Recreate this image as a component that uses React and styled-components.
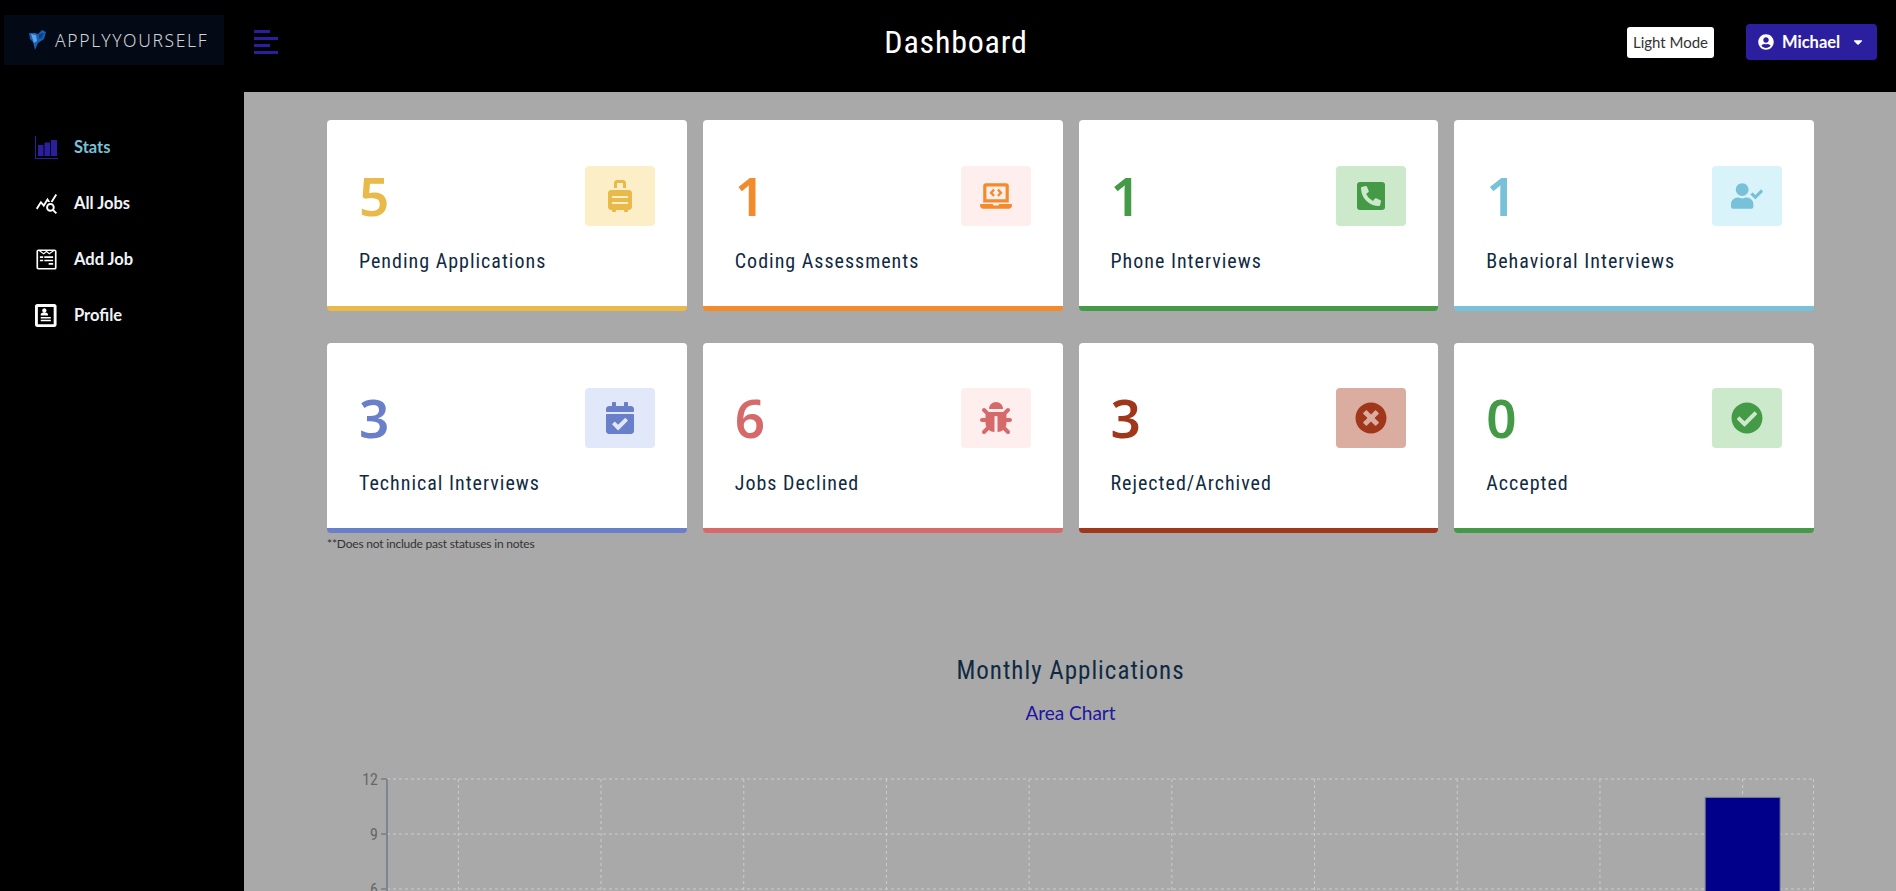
import React from 'react'
import styled, {createGlobalStyle} from 'styled-components'
import {
  FaSuitcaseRolling,
  FaLaptopCode,
  FaPhoneSquareAlt,
  FaUserCheck,
  FaCalendarCheck,
  FaBug,
  FaTimesCircle,
  FaCheckCircle,
  FaUserCircle,
  FaCaretDown,
  FaWpforms
} from 'react-icons/fa'
import {ImProfile} from 'react-icons/im'
import {MdQueryStats} from 'react-icons/md'

const bodyFont = `Lato, "Noto Sans", sans-serif`
const headFont = `"Roboto Condensed", "Liberation Sans Narrow", Roboto, sans-serif`

const GlobalStyle = createGlobalStyle`
  html, body {
    margin: 0;
    height: 100%;
    overflow: hidden;
    background: #000;
    font-family: ${bodyFont};
  }
  * {
    box-sizing: border-box;
  }
`

const Page = styled.div`
  display: grid;
  grid-template-columns: 244px 1fr;
  grid-template-rows: 92px 1fr;
  height: 100vh;
  overflow: hidden;
`

const Header = styled.header`
  grid-column: 1 / 3;
  display: flex;
  align-items: center;
  background: #000;
  padding: 0 19px 0 4px;
`

const LogoBox = styled.div`
  display: flex;
  align-items: center;
  gap: 9px;
  width: 220px;
  height: 50px;
  margin-top: -12px;
  padding-left: 25px;
  background: #030a15;
`

const LogoText = styled.span`
  font-family: "Noto Sans", sans-serif;
  font-size: 17.5px;
  font-weight: 300;
  letter-spacing: 1.65px;
  color: #d0d3d8;
`

const MenuButton = styled.div`
  display: flex;
  flex-direction: column;
  gap: 4px;
  width: 24px;
  margin-left: 30px;
  margin-top: -8px;
`

const MenuBar = styled.span`
  display: block;
  height: 3px;
  width: ${props => (props.$short ? '16px' : '24px')};
  background: #2c1f9f;
`

const Title = styled.h1`
  flex: 1;
  margin: -8px 0 0;
  padding-left: 7px;
  text-align: center;
  font-family: ${headFont};
  font-size: 32px;
  font-weight: 400;
  letter-spacing: 0.8px;
  color: #fff;
`

const ModeButton = styled.button`
  width: 87px;
  height: 31px;
  margin-right: 32px;
  margin-top: -8px;
  padding: 0;
  border: 0;
  border-radius: 3px;
  background: #fff;
  color: #333;
  font-family: ${bodyFont};
  font-size: 15px;
`

const UserButton = styled.button`
  display: flex;
  align-items: center;
  width: 131px;
  height: 36px;
  margin-top: -8px;
  padding: 0 0 0 12px;
  border: 0;
  border-radius: 4px;
  background: #2c1f9f;
  color: #fff;
  font-family: ${bodyFont};
  font-size: 16.5px;
  font-weight: 700;
`

const UserName = styled.span`
  margin: -1px 11px 0 8px;
`

const Sidebar = styled.nav`
  display: flex;
  flex-direction: column;
  padding-top: 27px;
  background: #000;
`

const NavItem = styled.a`
  display: flex;
  align-items: center;
  height: 56px;
  padding-left: 35px;
  font-size: 16.5px;
  font-weight: 700;
  color: ${props => (props.$active ? '#7ac0d8' : '#f0f4f8')};
`

const NavIcon = styled.span`
  display: flex;
  width: 39px;
  font-size: 23px;
  color: ${props => (props.$active ? '#2c1f9f' : '#fff')};
`

const Main = styled.main`
  display: flex;
  flex-direction: column;
  align-items: center;
  padding: 28px 0 0 1px;
  background: #a9a9a9;
  overflow: hidden;
`

const StatsGrid = styled.section`
  display: grid;
  grid-template-columns: repeat(4, 1fr);
  grid-auto-rows: 190.6px;
  gap: 32px 16px;
  width: 1487px;
`

const Card = styled.article`
  padding: 45.6px 32px 0;
  border-bottom: 5px solid ${props => props.$color};
  border-radius: 4px;
  background: #fff;
`

const CardTop = styled.div`
  display: flex;
  justify-content: space-between;
  align-items: center;
`

const Count = styled.span`
  font-family: "Noto Sans", sans-serif;
  font-size: 53px;
  font-weight: 600;
  line-height: 60px;
  color: ${props => props.$color};
`

const IconBox = styled.span`
  display: flex;
  align-items: center;
  justify-content: center;
  width: 70px;
  height: 60px;
  border-radius: 4px;
  font-size: 32px;
  background: ${props => props.$bg};
  color: ${props => props.$color};
`

const Label = styled.h5`
  margin: 20px 0 0;
  font-family: ${headFont};
  font-size: 20px;
  font-weight: 400;
  line-height: 30px;
  letter-spacing: 1px;
  color: #102a43;
`

const Note = styled.p`
  width: 1487px;
  margin: 3px 0 0;
  font-size: 12px;
  letter-spacing: -0.2px;
  color: #333;
`

const ChartTitle = styled.h4`
  margin: 105px 0 0;
  font-family: ${headFont};
  font-size: 25px;
  font-weight: 400;
  letter-spacing: 1px;
  color: #102a43;
`

const ChartType = styled.span`
  margin-top: 16px;
  font-size: 19px;
  color: #2015a0;
`

const ChartFrame = styled.div`
  width: 1487px;
  margin-top: 46px;
  svg {
    display: block;
  }
`

const cards = [
  {n: 5, label: 'Pending Applications', color: '#e9b949', bg: '#fcefc7', Icon: FaSuitcaseRolling},
  {n: 1, label: 'Coding Assessments', color: '#f38b2a', bg: '#ffeeee', Icon: FaLaptopCode},
  {n: 1, label: 'Phone Interviews', color: '#459a47', bg: '#cceacb', Icon: FaPhoneSquareAlt},
  {n: 1, label: 'Behavioral Interviews', color: '#78c1d8', bg: '#d9f3fa', Icon: FaUserCheck},
  {n: 3, label: 'Technical Interviews', color: '#6a7fca', bg: '#e0e8f9', Icon: FaCalendarCheck},
  {n: 6, label: 'Jobs Declined', color: '#d66a6a', bg: '#ffeeee', Icon: FaBug},
  {n: 3, label: 'Rejected/Archived', color: '#a0361a', bg: '#dbaca0', Icon: FaTimesCircle},
  {n: 0, label: 'Accepted', color: '#459a47', bg: '#cceacb', Icon: FaCheckCircle}
]

const StatsIcon = () => (
  <svg width="23" height="23" viewBox="0 0 23 23" fill="currentColor">
    <rect x="0" y="0" width="1" height="23" />
    <rect x="0" y="22" width="23" height="1" />
    <rect x="3" y="9" width="5.5" height="11" />
    <rect x="9.5" y="6.5" width="5.5" height="13.5" />
    <rect x="16" y="4" width="6" height="16" />
  </svg>
)

const links = [
  {label: 'Stats', Icon: StatsIcon, active: true},
  {label: 'All Jobs', Icon: MdQueryStats},
  {label: 'Add Job', Icon: FaWpforms},
  {label: 'Profile', Icon: ImProfile}
]

const Logo = () => (
  <svg width="17" height="20" viewBox="0 0 17 20">
    <path d="M0 3 L6 3 L9 4 L13 0 L17 2 L15 9 L9 13 L6 20 L4 12 L1 9 Z" fill="#1a5fb4" />
    <path d="M2 4 L7 5 L8 11 L5 13 Z" fill="#58a6e8" />
    <path d="M10 4 L15 3 L13 8 L10 9 Z" fill="#0f3f86" />
  </svg>
)

const CHART_W = 1487
const AXIS_X = 60
const BAND = 142.7
const ROW = 55
const TOP = 9

const Chart = () => {
  const bands = Array.from({length: 10}, (_, i) => AXIS_X + BAND * i + BAND / 2)
  const ticks = [12, 9, 6]
  const barHeight = ROW * (11 / 3)
  return (
    <svg width={CHART_W} height={300}>
      {ticks.map((t, i) => {
        const y = TOP + ROW * i
        return (
          <g key={t}>
            <line x1={AXIS_X} x2={CHART_W} y1={y} y2={y} stroke="#ccc" strokeDasharray="3 3" />
            <line x1={AXIS_X - 6} x2={AXIS_X} y1={y} y2={y} stroke="#666" />
            <text x={AXIS_X - 9} y={y + 6} textAnchor="end" fontSize="16" fill="#666" fontFamily={headFont}>
              {t}
            </text>
          </g>
        )
      })}
      {bands.map(x => (
        <line key={x} x1={x} x2={x} y1={TOP} y2={TOP + ROW * 4} stroke="#ccc" strokeDasharray="3 3" />
      ))}
      <line x1={CHART_W - 0.5} x2={CHART_W - 0.5} y1={TOP} y2={TOP + ROW * 4} stroke="#ccc" strokeDasharray="3 3" />
      <line x1={AXIS_X} x2={AXIS_X} y1={TOP} y2={TOP + ROW * 4} stroke="#7e8494" strokeWidth="2" />
      <rect
        x={bands[9] - 37.5}
        y={TOP + ROW * 4 - barHeight}
        width={75}
        height={barHeight}
        fill="#00008b"
        stroke="#7e8494"
      />
    </svg>
  )
}

const App = () => (
  <Page>
    <GlobalStyle />
    <Header>
      <LogoBox>
        <Logo />
        <LogoText>APPLYYOURSELF</LogoText>
      </LogoBox>
      <MenuButton>
        <MenuBar $short />
        <MenuBar />
        <MenuBar $short />
        <MenuBar />
      </MenuButton>
      <Title>Dashboard</Title>
      <ModeButton>Light Mode</ModeButton>
      <UserButton>
        <FaUserCircle size={16} />
        <UserName>Michael</UserName>
        <FaCaretDown size={14} />
      </UserButton>
    </Header>
    <Sidebar>
      {links.map(({label, Icon, active}) => (
        <NavItem key={label} $active={active}>
          <NavIcon $active={active}>
            <Icon />
          </NavIcon>
          {label}
        </NavItem>
      ))}
    </Sidebar>
    <Main>
      <StatsGrid>
        {cards.map(({n, label, color, bg, Icon}) => (
          <Card key={label} $color={color}>
            <CardTop>
              <Count $color={color}>{n}</Count>
              <IconBox $color={color} $bg={bg}>
                <Icon />
              </IconBox>
            </CardTop>
            <Label>{label}</Label>
          </Card>
        ))}
      </StatsGrid>
      <Note>**Does not include past statuses in notes</Note>
      <ChartTitle>Monthly Applications</ChartTitle>
      <ChartType>Area Chart</ChartType>
      <ChartFrame>
        <Chart />
      </ChartFrame>
    </Main>
  </Page>
)

export default App
